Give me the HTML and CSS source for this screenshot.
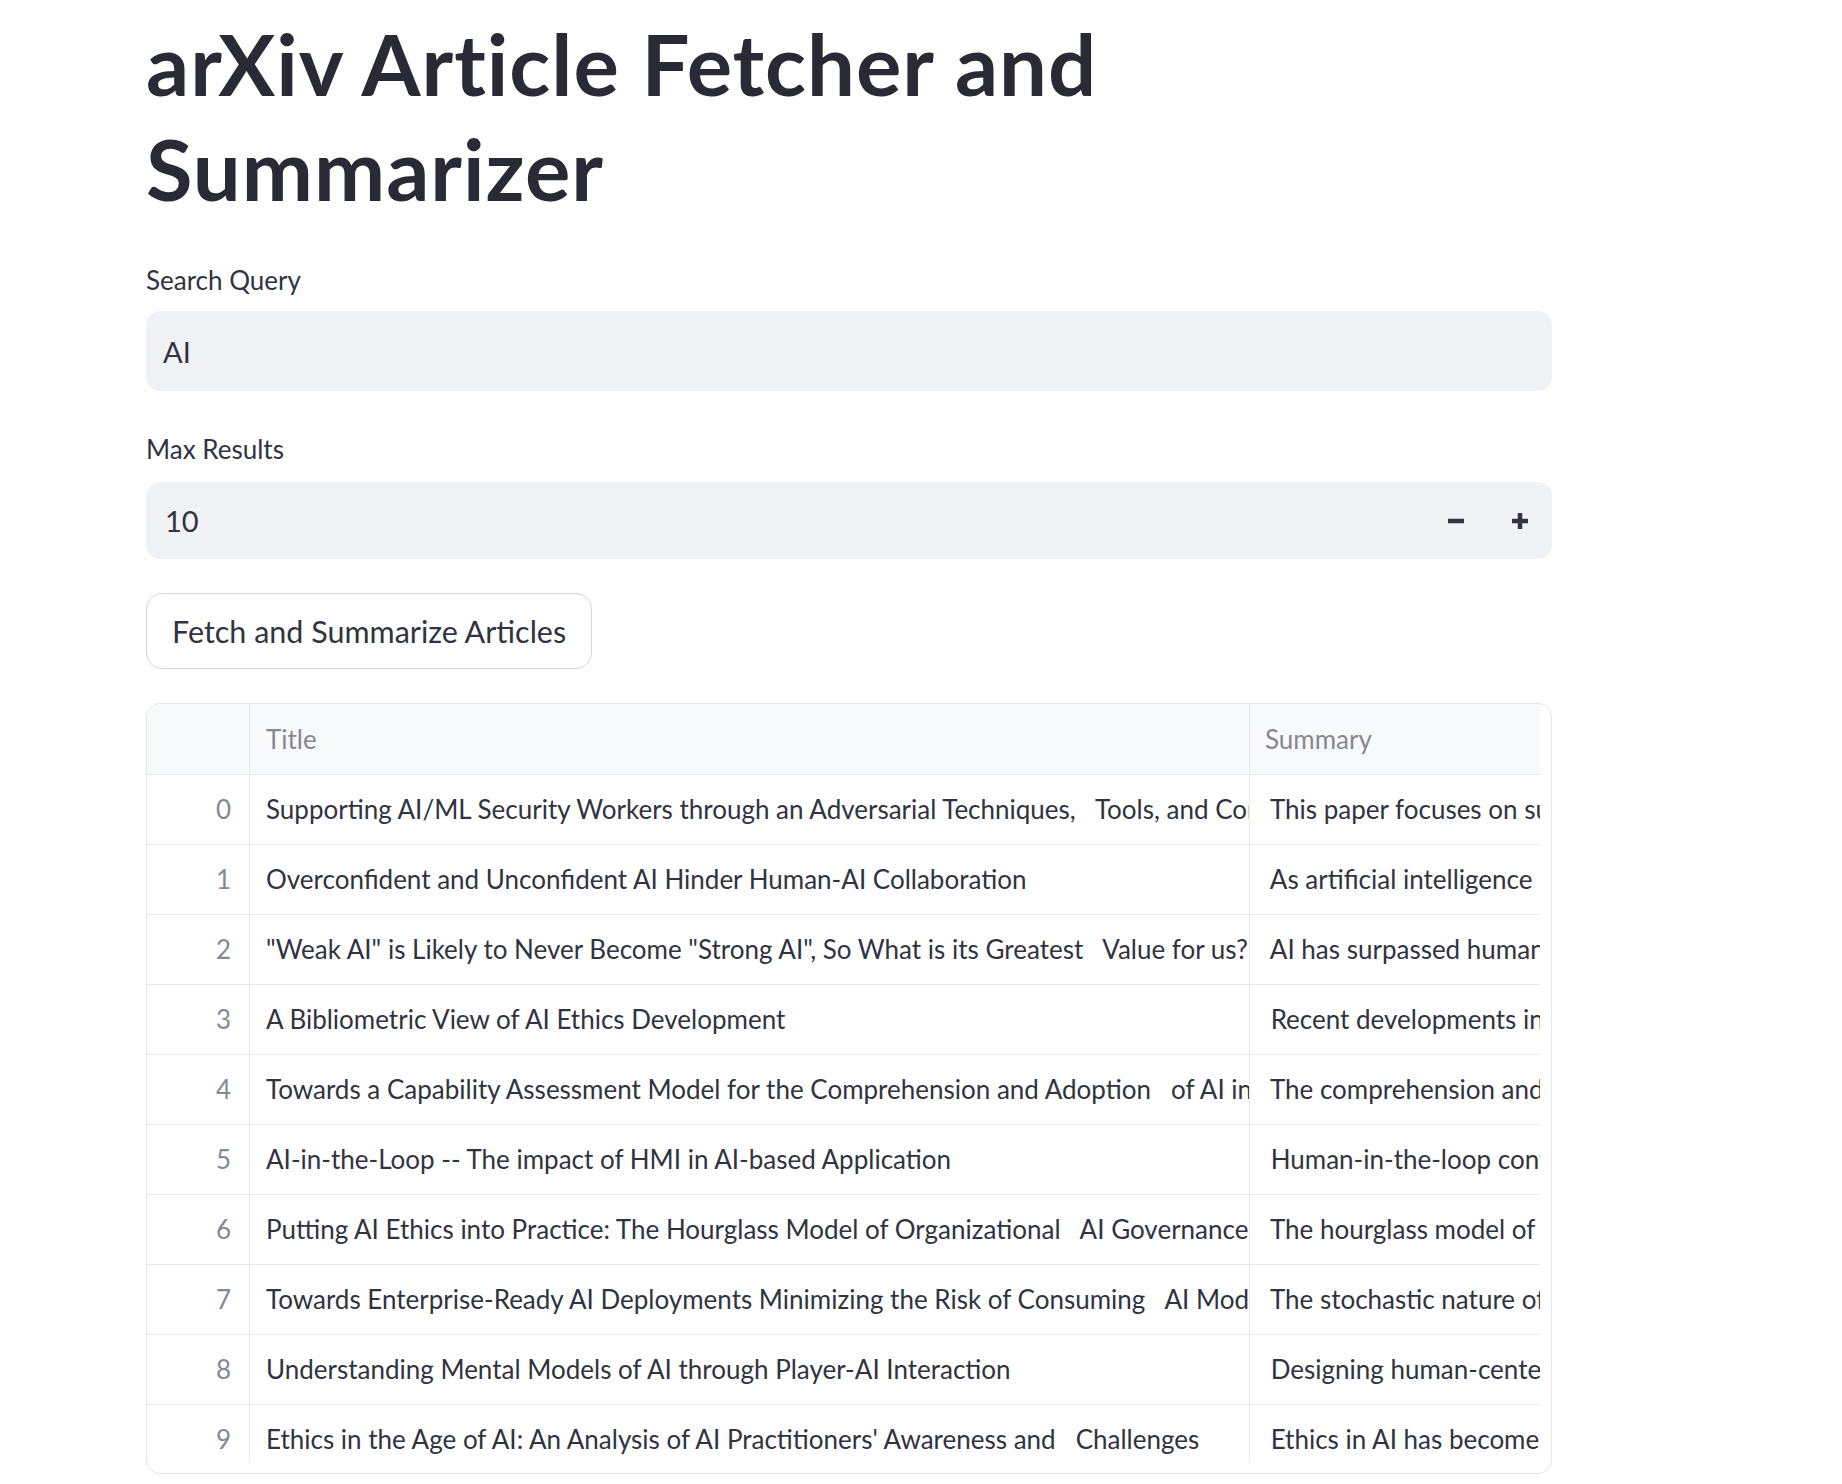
FILE: index.html
```html
<!DOCTYPE html>
<html lang="en">
<head>
<meta charset="utf-8">
<title>arXiv Article Fetcher and Summarizer</title>
<link rel="stylesheet" href="styles.css">
</head>
<body>
<main class="main">
  <h1 class="page-title">arXiv Article Fetcher and Summarizer</h1>

  <label class="field-label label-query">Search Query</label>
  <div class="text-input">AI</div>

  <label class="field-label label-max">Max Results</label>
  <div class="number-input">
    <div class="number-value">10</div>
    <div class="step-btn" aria-label="decrement">
      <svg width="16" height="16" viewBox="0 0 16 16"><path d="M0 8H16" stroke="#31333f" stroke-width="4.5"/></svg>
    </div>
    <div class="step-btn" aria-label="increment">
      <svg width="16" height="16" viewBox="0 0 16 16"><path d="M0 8H16M8 0V16" stroke="#31333f" stroke-width="4.5"/></svg>
    </div>
  </div>

  <button class="btn">Fetch and Summarize Articles</button>

  <div class="table">
    <div class="viewport">
      <div class="row head">
        <div class="cell idx"></div>
        <div class="cell col-title">Title</div>
        <div class="cell col-summary">Summary</div>
      </div>
      <div class="row">
        <div class="cell idx">0</div>
        <div class="cell col-title">Supporting AI/ML Security Workers through an Adversarial Techniques,   Tools, and Common Knowledge (AI/ML ATT&amp;CK) Framework</div>
        <div class="cell col-summary"> This paper focuses on supporting AI/ML Security Workers</div>
      </div>
      <div class="row">
        <div class="cell idx">1</div>
        <div class="cell col-title">Overconfident and Unconfident AI Hinder Human-AI Collaboration</div>
        <div class="cell col-summary"> As artificial intelligence (AI) advances, human-AI collaboration</div>
      </div>
      <div class="row">
        <div class="cell idx">2</div>
        <div class="cell col-title">"Weak AI" is Likely to Never Become "Strong AI", So What is its Greatest   Value for us?</div>
        <div class="cell col-summary"> AI has surpassed humans across a variety of tasks</div>
      </div>
      <div class="row">
        <div class="cell idx">3</div>
        <div class="cell col-title">A Bibliometric View of AI Ethics Development</div>
        <div class="cell col-summary"> Recent developments in AI ethics have been studied</div>
      </div>
      <div class="row">
        <div class="cell idx">4</div>
        <div class="cell col-title">Towards a Capability Assessment Model for the Comprehension and Adoption   of AI in Organisations</div>
        <div class="cell col-summary"> The comprehension and adoption of AI are in practice</div>
      </div>
      <div class="row">
        <div class="cell idx">5</div>
        <div class="cell col-title">AI-in-the-Loop -- The impact of HMI in AI-based Application</div>
        <div class="cell col-summary"> Human-in-the-loop control has been widely adopted</div>
      </div>
      <div class="row">
        <div class="cell idx">6</div>
        <div class="cell col-title">Putting AI Ethics into Practice: The Hourglass Model of Organizational   AI Governance</div>
        <div class="cell col-summary"> The hourglass model of organizational AI governance</div>
      </div>
      <div class="row">
        <div class="cell idx">7</div>
        <div class="cell col-title">Towards Enterprise-Ready AI Deployments Minimizing the Risk of Consuming   AI Models in Business Applications</div>
        <div class="cell col-summary"> The stochastic nature of AI models makes deployment</div>
      </div>
      <div class="row">
        <div class="cell idx">8</div>
        <div class="cell col-title">Understanding Mental Models of AI through Player-AI Interaction</div>
        <div class="cell col-summary"> Designing human-centered AI-driven applications</div>
      </div>
      <div class="row">
        <div class="cell idx">9</div>
        <div class="cell col-title">Ethics in the Age of AI: An Analysis of AI Practitioners' Awareness and   Challenges</div>
        <div class="cell col-summary"> Ethics in AI has become a debated topic of public</div>
      </div>
    </div>
  </div>
</main>
</body>
</html>
```

FILE: styles.css
```css
* {
  box-sizing: border-box;
}

html, body {
  margin: 0;
  padding: 0;
  background: #ffffff;
}

body {
  font-family: "Lato", sans-serif;
  color: #31333f;
}

.main {
  width: 1406px;
  margin-left: 146px;
  display: flex;
  flex-direction: column;
  align-items: flex-start;
}

.page-title {
  margin: 0;
  padding-top: 11px;
  max-width: 1250px;
  font-size: 85px;
  line-height: 105px;
  font-weight: 700;
  color: #292a35;
  letter-spacing: 1px;
}

.field-label {
  display: block;
  font-size: 26px;
  line-height: 40px;
  height: 40px;
  color: #31333f;
}

.label-query {
  margin-top: 39px;
  margin-bottom: 11px;
}

.label-max {
  margin-top: 38px;
  margin-bottom: 13px;
}

.text-input {
  width: 100%;
  height: 80px;
  background: #f0f2f6;
  border-radius: 14px;
  padding: 0 17px;
  display: flex;
  align-items: center;
  font-size: 29px;
  color: #31333f;
}

.number-input {
  width: 100%;
  height: 77px;
  background: #f0f2f6;
  border-radius: 14px;
  display: flex;
  align-items: center;
}

.number-value {
  flex: 1;
  padding-left: 19px;
  font-size: 29px;
  color: #31333f;
}

.step-btn {
  width: 64px;
  height: 100%;
  display: flex;
  align-items: center;
  justify-content: center;
}

.btn {
  margin-top: 34px;
  height: 76px;
  padding: 0 25px;
  background: #ffffff;
  border: 1px solid #d5d6da;
  border-radius: 16px;
  font-family: "Lato", sans-serif;
  font-size: 30.5px;
  color: #31333f;
}

.table {
  margin-top: 34px;
  width: 1406px;
  height: 771px;
  border: 1px solid #e4e5e8;
  border-radius: 14px;
  padding: 0 11px 11px 0;
  overflow: hidden;
}

.viewport {
  width: 1393px;
  height: 758px;
  overflow: hidden;
}

.row {
  display: flex;
  height: 70px;
  border-bottom: 1px solid #e8e9ec;
  width: 1850px;
}

.row.head {
  height: 71px;
  background: #f8f9fb;
}

.cell {
  flex: 0 0 auto;
  height: 100%;
  overflow: hidden;
  white-space: pre;
  font-size: 26px;
  line-height: 69px;
  padding: 0 0 0 16px;
  border-right: 1px solid #e8e9ec;
  color: #31333f;
}

.head .cell {
  line-height: 70px;
  color: #868893;
}

.idx {
  width: 103px;
  text-align: right;
  padding: 0 18px 0 0;
  color: #868893;
}

.col-title {
  width: 1000px;
}

.col-summary {
  width: 700px;
  padding-left: 14px;
}

.head .col-summary {
  padding-left: 15px;
}
```
